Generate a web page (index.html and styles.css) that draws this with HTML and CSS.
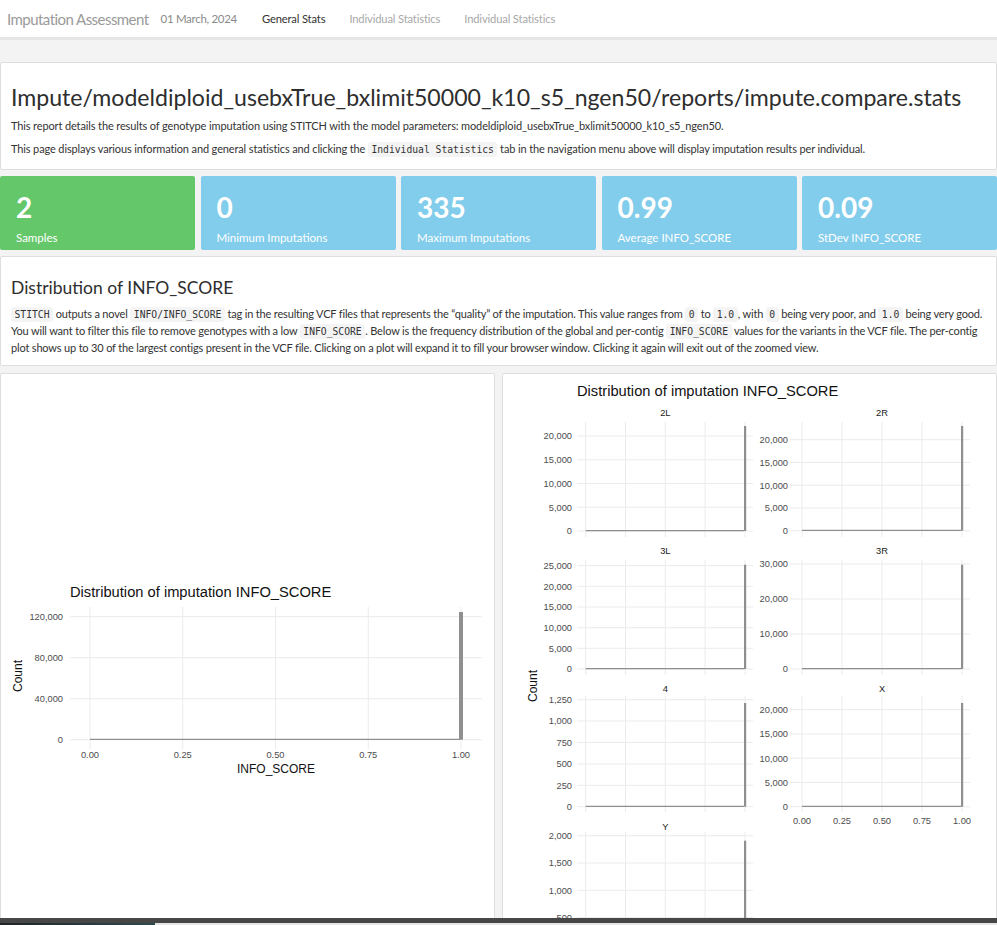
FILE: index.html
```html
<!DOCTYPE html>
<html lang="en">
<head>
<meta charset="utf-8">
<title>Imputation Assessment</title>
<link rel="stylesheet" href="styles.css">
</head>
<body>
<nav class="navbar">
  <span class="brand">Imputation Assessment</span>
  <span class="date">01 March, 2024</span>
  <ul class="tabs">
    <li class="tab active">General Stats</li>
    <li class="tab">Individual Statistics</li>
    <li class="tab">Individual Statistics</li>
  </ul>
</nav>
<main class="content">
  <section class="card header-card">
    <h1>Impute/modeldiploid_usebxTrue_bxlimit50000_k10_s5_ngen50/reports/impute.compare.stats</h1>
    <p>This report details the results of genotype imputation using STITCH with the model parameters: modeldiploid_usebxTrue_bxlimit50000_k10_s5_ngen50.</p>
    <p>This page displays various information and general statistics and clicking the <code>Individual Statistics</code> tab in the navigation menu above will display imputation results per individual.</p>
  </section>

  <section class="value-boxes">
    <div class="vbox green"><span class="vnum">2</span><span class="vlabel">Samples</span></div>
    <div class="vbox blue"><span class="vnum">0</span><span class="vlabel">Minimum Imputations</span></div>
    <div class="vbox blue"><span class="vnum">335</span><span class="vlabel">Maximum Imputations</span></div>
    <div class="vbox blue"><span class="vnum">0.99</span><span class="vlabel">Average INFO_SCORE</span></div>
    <div class="vbox blue"><span class="vnum">0.09</span><span class="vlabel">StDev INFO_SCORE</span></div>
  </section>

  <section class="card dist-card">
    <h2>Distribution of INFO_SCORE</h2>
    <p><code>STITCH</code> outputs a novel <code>INFO/INFO_SCORE</code> tag in the resulting VCF files that represents the “quality” of the imputation. This value ranges from <code>0</code> to <code>1.0</code>, with <code>0</code> being very poor, and <code>1.0</code> being very good. You will want to filter this file to remove genotypes with a low <code>INFO_SCORE</code>. Below is the frequency distribution of the global and per-contig <code>INFO_SCORE</code> values for the variants in the VCF file. The per-contig plot shows up to 30 of the largest contigs present in the VCF file. Clicking on a plot will expand it to fill your browser window. Clicking it again will exit out of the zoomed view.</p>
  </section>

  <section class="plots">
    <div class="card plot-card">
      <svg class="plot" width="493" height="600" viewBox="0 0 493 600">
        <g transform="translate(-1,-375)">
          <g class="grid">
            <line x1="70" x2="482" y1="617.7" y2="617.7"/>
            <line x1="70" x2="482" y1="658.7" y2="658.7"/>
            <line x1="70" x2="482" y1="699.7" y2="699.7"/>
            <line x1="70" x2="482" y1="740.7" y2="740.7"/>
            <line x1="90" x2="90" y1="608" y2="750"/>
            <line x1="182.75" x2="182.75" y1="608" y2="750"/>
            <line x1="275.5" x2="275.5" y1="608" y2="750"/>
            <line x1="368.25" x2="368.25" y1="608" y2="750"/>
            <line x1="461" x2="461" y1="608" y2="750"/>
          </g>
          <line class="base" x1="90" x2="460" y1="740.4" y2="740.4"/>
          <rect class="bar" x="459" y="613" width="4" height="127.7"/>
          <text class="ptitle" x="70" y="598">Distribution of imputation INFO_SCORE</text>
          <g class="ylab">
            <text x="63" y="621.1">120,000</text>
            <text x="63" y="662.1">80,000</text>
            <text x="63" y="703.1">40,000</text>
            <text x="63" y="744.1">0</text>
          </g>
          <g class="xlab">
            <text x="90" y="759">0.00</text>
            <text x="182.75" y="759">0.25</text>
            <text x="275.5" y="759">0.50</text>
            <text x="368.25" y="759">0.75</text>
            <text x="461" y="759">1.00</text>
          </g>
          <text class="atitle" x="276" y="773.5" text-anchor="middle">INFO_SCORE</text>
          <text class="atitle" transform="translate(22.3,677) rotate(-90)" text-anchor="middle">Count</text>
        </g>
      </svg>
    </div>

    <div class="card plot-card">
      <svg class="plot" width="493" height="600" viewBox="0 0 493 600">
        <g transform="translate(-503,-375)">
          <text class="ptitle" x="577" y="397">Distribution of imputation INFO_SCORE</text>

          <g class="grid">
            <!-- 2L -->
            <line x1="577" x2="753" y1="532" y2="532"/>
            <line x1="577" x2="753" y1="508.25" y2="508.25"/>
            <line x1="577" x2="753" y1="484.5" y2="484.5"/>
            <line x1="577" x2="753" y1="460.75" y2="460.75"/>
            <line x1="577" x2="753" y1="437" y2="437"/>
            <line x1="585.7" x2="585.7" y1="423" y2="538"/>
            <line x1="625.5" x2="625.5" y1="423" y2="538"/>
            <line x1="665.3" x2="665.3" y1="423" y2="538"/>
            <line x1="705.1" x2="705.1" y1="423" y2="538"/>
            <line x1="745" x2="745" y1="423" y2="538"/>
            <!-- 2R -->
            <line x1="790" x2="970" y1="531.7" y2="531.7"/>
            <line x1="790" x2="970" y1="509" y2="509"/>
            <line x1="790" x2="970" y1="486.2" y2="486.2"/>
            <line x1="790" x2="970" y1="463.5" y2="463.5"/>
            <line x1="790" x2="970" y1="440.7" y2="440.7"/>
            <line x1="802" x2="802" y1="423" y2="538"/>
            <line x1="842" x2="842" y1="423" y2="538"/>
            <line x1="882" x2="882" y1="423" y2="538"/>
            <line x1="922" x2="922" y1="423" y2="538"/>
            <line x1="962" x2="962" y1="423" y2="538"/>
            <!-- 3L -->
            <line x1="577" x2="753" y1="670" y2="670"/>
            <line x1="577" x2="753" y1="649.3" y2="649.3"/>
            <line x1="577" x2="753" y1="628.7" y2="628.7"/>
            <line x1="577" x2="753" y1="608" y2="608"/>
            <line x1="577" x2="753" y1="587.3" y2="587.3"/>
            <line x1="577" x2="753" y1="566.7" y2="566.7"/>
            <line x1="585.7" x2="585.7" y1="561" y2="676"/>
            <line x1="625.5" x2="625.5" y1="561" y2="676"/>
            <line x1="665.3" x2="665.3" y1="561" y2="676"/>
            <line x1="705.1" x2="705.1" y1="561" y2="676"/>
            <line x1="745" x2="745" y1="561" y2="676"/>
            <!-- 3R -->
            <line x1="790" x2="970" y1="670" y2="670"/>
            <line x1="790" x2="970" y1="635" y2="635"/>
            <line x1="790" x2="970" y1="600" y2="600"/>
            <line x1="790" x2="970" y1="565" y2="565"/>
            <line x1="802" x2="802" y1="561" y2="676"/>
            <line x1="842" x2="842" y1="561" y2="676"/>
            <line x1="882" x2="882" y1="561" y2="676"/>
            <line x1="922" x2="922" y1="561" y2="676"/>
            <line x1="962" x2="962" y1="561" y2="676"/>
            <!-- 4 -->
            <line x1="577" x2="753" y1="807.7" y2="807.7"/>
            <line x1="577" x2="753" y1="786.3" y2="786.3"/>
            <line x1="577" x2="753" y1="765" y2="765"/>
            <line x1="577" x2="753" y1="743.5" y2="743.5"/>
            <line x1="577" x2="753" y1="722" y2="722"/>
            <line x1="577" x2="753" y1="700.7" y2="700.7"/>
            <line x1="585.7" x2="585.7" y1="697" y2="813"/>
            <line x1="625.5" x2="625.5" y1="697" y2="813"/>
            <line x1="665.3" x2="665.3" y1="697" y2="813"/>
            <line x1="705.1" x2="705.1" y1="697" y2="813"/>
            <line x1="745" x2="745" y1="697" y2="813"/>
            <!-- X -->
            <line x1="790" x2="970" y1="807.7" y2="807.7"/>
            <line x1="790" x2="970" y1="783.5" y2="783.5"/>
            <line x1="790" x2="970" y1="759.2" y2="759.2"/>
            <line x1="790" x2="970" y1="735" y2="735"/>
            <line x1="790" x2="970" y1="710.7" y2="710.7"/>
            <line x1="802" x2="802" y1="697" y2="813"/>
            <line x1="842" x2="842" y1="697" y2="813"/>
            <line x1="882" x2="882" y1="697" y2="813"/>
            <line x1="922" x2="922" y1="697" y2="813"/>
            <line x1="962" x2="962" y1="697" y2="813"/>
            <!-- Y -->
            <line x1="577" x2="753" y1="945.9" y2="945.9"/>
            <line x1="577" x2="753" y1="918.6" y2="918.6"/>
            <line x1="577" x2="753" y1="891.3" y2="891.3"/>
            <line x1="577" x2="753" y1="864" y2="864"/>
            <line x1="577" x2="753" y1="836.7" y2="836.7"/>
            <line x1="585.7" x2="585.7" y1="833" y2="952"/>
            <line x1="625.5" x2="625.5" y1="833" y2="952"/>
            <line x1="665.3" x2="665.3" y1="833" y2="952"/>
            <line x1="705.1" x2="705.1" y1="833" y2="952"/>
            <line x1="745" x2="745" y1="833" y2="952"/>
          </g>

          <g>
            <line class="base" x1="585.7" x2="744" y1="531.6" y2="531.6"/>
            <rect class="bar" x="744" y="427" width="2.2" height="105"/>
            <line class="base" x1="802" x2="961" y1="531.3" y2="531.3"/>
            <rect class="bar" x="961" y="427" width="2.2" height="104.7"/>
            <line class="base" x1="585.7" x2="744" y1="669.6" y2="669.6"/>
            <rect class="bar" x="744" y="565.7" width="2.2" height="104.3"/>
            <line class="base" x1="802" x2="961" y1="669.6" y2="669.6"/>
            <rect class="bar" x="961" y="565.7" width="2.2" height="104.3"/>
            <line class="base" x1="585.7" x2="744" y1="807.3" y2="807.3"/>
            <rect class="bar" x="744" y="704" width="2.2" height="103.7"/>
            <line class="base" x1="802" x2="961" y1="807.3" y2="807.3"/>
            <rect class="bar" x="961" y="704" width="2.2" height="103.7"/>
            <line class="base" x1="585.7" x2="744" y1="945.5" y2="945.5"/>
            <rect class="bar" x="744" y="841.7" width="2.2" height="104.2"/>
          </g>

          <g class="strip">
            <text x="665.3" y="417.3">2L</text>
            <text x="882" y="417.3">2R</text>
            <text x="665.3" y="555.3">3L</text>
            <text x="882" y="555.3">3R</text>
            <text x="665.3" y="693.3">4</text>
            <text x="882" y="693.3">X</text>
            <text x="665.3" y="831.3">Y</text>
          </g>

          <g class="ylab">
            <text x="572" y="535.3">0</text>
            <text x="572" y="511.6">5,000</text>
            <text x="572" y="487.8">10,000</text>
            <text x="572" y="464.1">15,000</text>
            <text x="572" y="440.3">20,000</text>

            <text x="572" y="673.3">0</text>
            <text x="572" y="652.6">5,000</text>
            <text x="572" y="632">10,000</text>
            <text x="572" y="611.3">15,000</text>
            <text x="572" y="590.6">20,000</text>
            <text x="572" y="570">25,000</text>

            <text x="572" y="811">0</text>
            <text x="572" y="789.6">250</text>
            <text x="572" y="768.3">500</text>
            <text x="572" y="746.8">750</text>
            <text x="572" y="725.3">1,000</text>
            <text x="572" y="704">1,250</text>

            <text x="572" y="949.2">0</text>
            <text x="572" y="921.9">500</text>
            <text x="572" y="894.6">1,000</text>
            <text x="572" y="867.3">1,500</text>
            <text x="572" y="840">2,000</text>
          </g>
          <g class="ylab">
            <text x="788" y="535">0</text>
            <text x="788" y="512.3">5,000</text>
            <text x="788" y="489.5">10,000</text>
            <text x="788" y="466.8">15,000</text>
            <text x="788" y="444">20,000</text>

            <text x="788" y="673.3">0</text>
            <text x="788" y="638.3">10,000</text>
            <text x="788" y="603.3">20,000</text>
            <text x="788" y="568.3">30,000</text>

            <text x="788" y="811">0</text>
            <text x="788" y="786.8">5,000</text>
            <text x="788" y="762.5">10,000</text>
            <text x="788" y="738.3">15,000</text>
            <text x="788" y="714">20,000</text>
          </g>
          <g class="xlab">
            <text x="802" y="825">0.00</text>
            <text x="842" y="825">0.25</text>
            <text x="882" y="825">0.50</text>
            <text x="922" y="825">0.75</text>
            <text x="962" y="825">1.00</text>
          </g>
          <text class="atitle" transform="translate(537.3,687) rotate(-90)" text-anchor="middle">Count</text>
        </g>
      </svg>
    </div>
  </section>
</main>
<div class="hscroll"><span class="hscroll-thumb"></span></div>
</body>
</html>
```

FILE: styles.css
```css
* {
  box-sizing: border-box;
}

html, body {
  margin: 0;
  padding: 0;
}

body {
  background: #f3f3f3;
  font-family: Lato, "Noto Sans", sans-serif;
  color: #333;
}

/* ---------- navbar ---------- */
.navbar {
  height: 40px;
  background: #fff;
  border-bottom: 3px solid #e6e6e6;
  display: flex;
  align-items: center;
  padding: 0 0 0 7px;
}

.brand {
  font-size: 15px;
  letter-spacing: -0.55px;
  color: #9a9a9a;
}

.date {
  font-size: 11.5px;
  letter-spacing: -0.3px;
  color: #8a8a8a;
  margin-left: 12px;
}

.tabs {
  display: flex;
  list-style: none;
  margin: 0 0 0 13px;
  padding: 0;
}

.tab {
  font-size: 11.2px;
  letter-spacing: -0.15px;
  color: #a8a8a8;
  padding: 0 12px;
}

.tab.active {
  color: #333;
}

/* ---------- content ---------- */
.content {
  padding-top: 22px;
  display: flex;
  flex-direction: column;
}

.card {
  background: #fff;
  border: 1px solid #dedede;
  border-radius: 2px;
}

code {
  font-family: "DejaVu Sans Mono", "Liberation Mono", monospace;
  font-size: 9.7px;
  letter-spacing: 0;
  background: #f4f4f4;
  color: #333;
  padding: 2px 3.5px;
  border-radius: 3px;
}

.header-card {
  height: 108px;
  padding: 18px 10px 0;
}

.header-card h1 {
  margin: 0 0 5px;
  font-size: 23.1px;
  line-height: 32px;
  font-weight: 400;
  color: #2e2e2e;
  white-space: nowrap;
}

.header-card p {
  margin: 0 0 7px;
  font-size: 11px;
  letter-spacing: -0.13px;
  line-height: 16px;
}

/* ---------- value boxes ---------- */
.value-boxes {
  margin-top: 6px;
  display: grid;
  grid-template-columns: repeat(5, 1fr);
  column-gap: 5.5px;
}

.vbox {
  height: 74px;
  border-radius: 2px;
  color: #fff;
  padding: 15px 16px 0;
  display: flex;
  flex-direction: column;
}

.vbox.green {
  background: #64c86a;
}

.vbox.blue {
  background: #82cdeb;
}

.vnum {
  font-size: 28px;
  font-weight: 700;
  line-height: 32px;
}

.vlabel {
  margin-top: 7px;
  font-size: 11.5px;
  line-height: 16px;
}

/* ---------- distribution card ---------- */
.dist-card {
  margin-top: 6px;
  height: 110px;
  padding: 18px 4px 0 10px;
}

.dist-card h2 {
  margin: 0 0 5px;
  font-size: 17.5px;
  line-height: 26px;
  font-weight: 400;
  color: #2e2e2e;
}

.dist-card p {
  margin: 0;
  font-size: 11px;
  letter-spacing: -0.17px;
  line-height: 16px;
}

/* ---------- plots ---------- */
.plots {
  margin-top: 7px;
  display: grid;
  grid-template-columns: 1fr 1fr;
  column-gap: 7px;
}

.plot-card {
  height: 602px;
  overflow: hidden;
}

.plot {
  display: block;
  font-family: "Liberation Sans", Arial, sans-serif;
}

.grid line {
  stroke: #ebebeb;
  stroke-width: 1;
}

.base {
  stroke: #8f8f8f;
  stroke-width: 1.2;
}

.bar {
  fill: #8f8f8f;
}

.ptitle {
  font-size: 14.7px;
  fill: #111;
}

.ylab text {
  font-size: 9.3px;
  fill: #4d4d4d;
  text-anchor: end;
}

.xlab text {
  font-size: 9.3px;
  fill: #4d4d4d;
  text-anchor: middle;
}

.strip text {
  font-size: 9.3px;
  fill: #1a1a1a;
  text-anchor: middle;
}

.atitle {
  font-size: 12px;
  fill: #111;
}

/* ---------- bottom scrollbar strip ---------- */
.hscroll {
  position: fixed;
  left: 0;
  right: 0;
  bottom: 0;
  height: 7px;
  background: #474747;
  border-bottom: 2px solid #e6e6e6;
}

.hscroll-thumb {
  position: absolute;
  left: 0;
  bottom: -2px;
  width: 155px;
  height: 2px;
  background: linear-gradient(90deg, #1f2428, #2f4a4e);
}
```
